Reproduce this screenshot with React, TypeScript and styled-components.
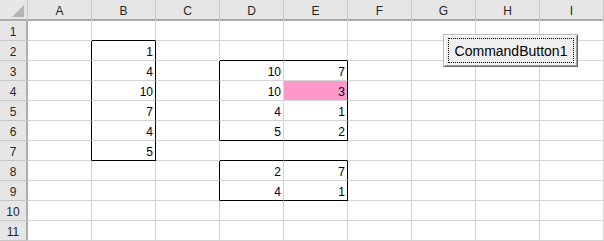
import React from "react";
import styled, { createGlobalStyle } from "styled-components";

const Global = createGlobalStyle`
  html, body { margin: 0; padding: 0; background: #ffffff; }
  body { font-family: "Liberation Sans", Arial, sans-serif; }
`;

const COLS = ["A", "B", "C", "D", "E", "F", "G", "H", "I"];
const ROWS = [1, 2, 3, 4, 5, 6, 7, 8, 9, 10, 11];

const VALUES: Record<string, string> = {
  B2: "1", B3: "4", B4: "10", B5: "7", B6: "4", B7: "5",
  D3: "10", E3: "7", D4: "10", E4: "3", D5: "4", E5: "1", D6: "5", E6: "2",
  D8: "2", E8: "7", D9: "4", E9: "1",
};

const FILLS: Record<string, string> = { E4: "#ff99cc" };

type Box = { c1: number; c2: number; r1: number; r2: number };
const BOXES: Box[] = [
  { c1: 1, c2: 1, r1: 2, r2: 7 },
  { c1: 3, c2: 4, r1: 3, r2: 6 },
  { c1: 3, c2: 4, r1: 8, r2: 9 },
];

const inBox = (c: number, r: number) =>
  BOXES.find((b) => c >= b.c1 && c <= b.c2 && r >= b.r1 && r <= b.r2);

const rightBlack = (c: number, r: number) => {
  const a = inBox(c, r);
  if (a && a.c2 === c) return true;
  const b = inBox(c + 1, r);
  return !!(b && b.c1 === c + 1);
};

const bottomBlack = (c: number, r: number) => {
  const a = inBox(c, r);
  if (a && a.r2 === r) return true;
  const b = inBox(c, r + 1);
  return !!(b && b.r1 === r + 1);
};

const Sheet = styled.div`
  position: relative;
  display: grid;
  grid-template-columns: 28px repeat(9, 64px);
  grid-template-rows: 21px repeat(11, 20px);
  width: 604px;
  height: 241px;
  overflow: hidden;
  font-size: 12px;
  color: #000;
`;

const Corner = styled.div`
  box-sizing: border-box;
  background: #e6e6e6;
  border-right: 1px solid #c6c6c6;
  box-shadow: inset 0 -2px 0 #ababab;
  position: relative;
  svg { display: block; }
`;

const ColHead = styled.div`
  box-sizing: border-box;
  background: #e6e6e6;
  border-right: 1px solid #c6c6c6;
  box-shadow: inset 0 -2px 0 #ababab;
  color: #262626;
  display: flex;
  justify-content: center;
  align-items: flex-start;
  padding-top: 4px;
  line-height: 14px;
`;

const RowHead = styled.div`
  box-sizing: border-box;
  background: #e6e6e6;
  border-bottom: 1px solid #c6c6c6;
  box-shadow: inset -2px 0 0 #ababab;
  color: #262626;
  display: flex;
  justify-content: center;
  align-items: flex-end;
  padding: 0 2px 1px 0;
  line-height: 14px;
`;

const Cell = styled.div<{ $right: boolean; $bottom: boolean; $fill?: string }>`
  box-sizing: border-box;
  background: ${(p) => p.$fill || "#ffffff"};
  border-right: 1px solid ${(p) => (p.$right ? "#000000" : "#d4d4d4")};
  border-bottom: 1px solid ${(p) => (p.$bottom ? "#000000" : "#d4d4d4")};
  display: flex;
  justify-content: flex-end;
  align-items: flex-end;
  padding: 0 2px 1px 0;
  line-height: 14px;
`;

const CommandButton = styled.button`
  position: absolute;
  left: 443px;
  top: 34px;
  width: 135px;
  height: 33px;
  box-sizing: border-box;
  margin: 0;
  padding: 3px 3px 3px 4px;
  background: #f0f0f0;
  border: 1px solid;
  border-color: #b9b9b9 #696969 #696969 #b9b9b9;
  box-shadow: inset 1px 1px 0 #ffffff, inset -1px -1px 0 #a0a0a0;
  font-family: "Liberation Sans", Arial, sans-serif;
  font-size: 14px;
  color: #000;
  display: flex;
`;

const FocusRing = styled.span`
  flex: 1;
  border: 1px dotted #000;
  display: flex;
  align-items: center;
  justify-content: center;
  line-height: 16px;
`;

export default function App() {
  return (
    <>
      <Global />
      <Sheet>
        <Corner>
          <svg width="27" height="19" viewBox="0 0 27 19">
            <polygon points="12,17 24,17 24,5" fill="#b4b4b4" />
          </svg>
        </Corner>
        {COLS.map((c) => (
          <ColHead key={c}>{c}</ColHead>
        ))}
        {ROWS.map((r) => (
          <React.Fragment key={r}>
            <RowHead>{r}</RowHead>
            {COLS.map((c, ci) => {
              const id = `${c}${r}`;
              return (
                <Cell
                  key={id}
                  $right={rightBlack(ci, r)}
                  $bottom={bottomBlack(ci, r)}
                  $fill={FILLS[id]}
                >
                  {VALUES[id] ?? ""}
                </Cell>
              );
            })}
          </React.Fragment>
        ))}
        <CommandButton type="button">
          <FocusRing>CommandButton1</FocusRing>
        </CommandButton>
      </Sheet>
    </>
  );
}
